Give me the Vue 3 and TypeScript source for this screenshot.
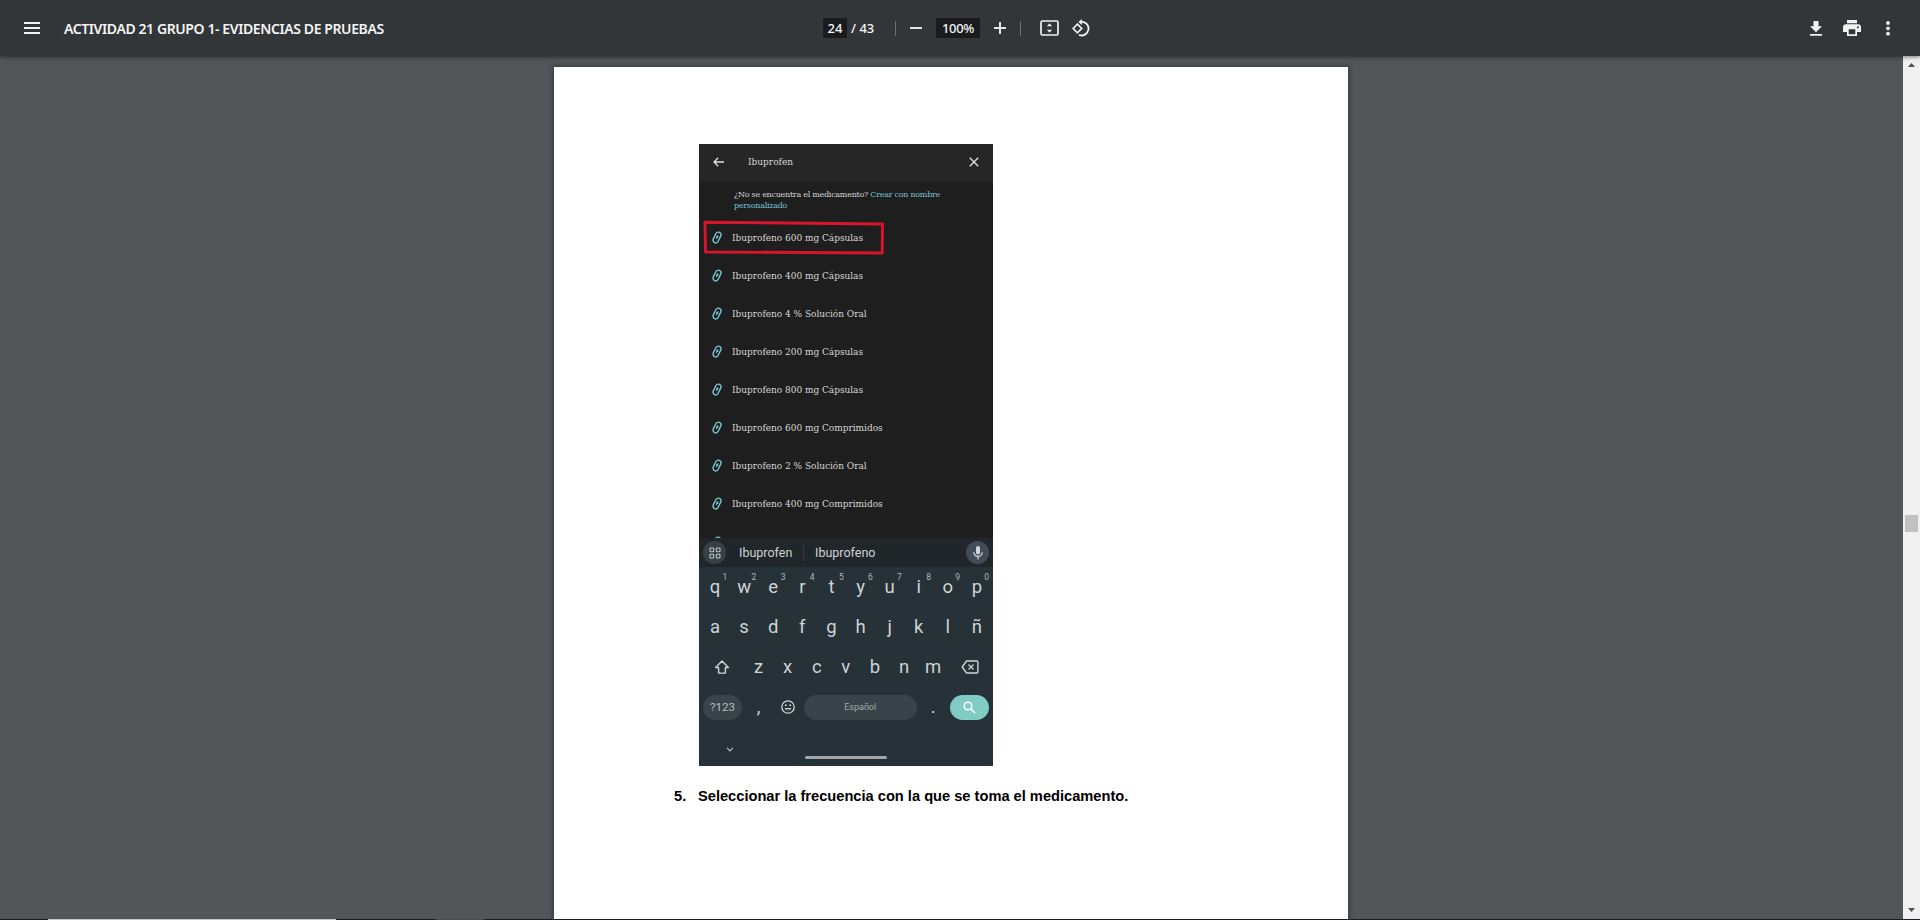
<script setup lang="ts">
interface Key {
  label: string
  hint?: string
}

const medicines: string[] = [
  'Ibuprofeno 600 mg Cápsulas',
  'Ibuprofeno 400 mg Cápsulas',
  'Ibuprofeno 4 % Solución Oral',
  'Ibuprofeno 200 mg Cápsulas',
  'Ibuprofeno 800 mg Cápsulas',
  'Ibuprofeno 600 mg Comprimidos',
  'Ibuprofeno 2 % Solución Oral',
  'Ibuprofeno 400 mg Comprimidos',
]

const topRow: Key[] = [...'qwertyuiop'].map((label, i) => ({ label, hint: String((i + 1) % 10) }))
const homeRow: Key[] = [...'asdfghjklñ'].map((label) => ({ label }))
const bottomRow: string[] = [...'zxcvbnm']
</script>

<template>
  <div class="viewer">
    <header class="toolbar">
      <div class="side left">
        <svg class="menu" width="16" height="12" viewBox="0 0 16 12"><path d="M0 0h16v2H0zM0 5h16v2H0zM0 10h16v2H0z" fill="#f1f1f1" /></svg>
        <span class="title">ACTIVIDAD 21 GRUPO 1- EVIDENCIAS DE PRUEBAS</span>
      </div>
      <div class="center">
        <span class="field page-no">24</span>
        <span class="total">/ 43</span>
        <i class="divider first"></i>
        <svg class="minus" width="12" height="12" viewBox="0 0 12 12"><path d="M0 5h12v2H0z" fill="#e4e4e4" /></svg>
        <span class="field zoom">100%</span>
        <svg class="plus" width="12" height="12" viewBox="0 0 12 12"><path d="M5 0h2v5h5v2H7v5H5V7H0V5h5z" fill="#e4e4e4" /></svg>
        <i class="divider second"></i>
        <svg class="fit" width="19" height="16" viewBox="0 0 19 16">
          <rect x="1" y="1" width="17" height="14" rx="1.4" fill="none" stroke="#f1f1f1" stroke-width="1.7" />
          <path d="M9.5 3.2l2.6 3H6.9zM9.5 12.8l2.6-3H6.9z" fill="#f1f1f1" />
        </svg>
        <svg class="rotate" width="18" height="18" viewBox="0 0 18 18">
          <path d="M5.4 5.2l4.3 4.3-4.3 4.3-4.3-4.3z" fill="none" stroke="#f1f1f1" stroke-width="1.7" />
          <path d="M9 2.9a6.8 6.8 0 1 1-2 13" fill="none" stroke="#f1f1f1" stroke-width="1.8" />
          <path d="M9.9 0v6L6.4 2.9z" fill="#f1f1f1" />
        </svg>
      </div>
      <div class="side right">
        <svg width="12" height="15" viewBox="0 0 12 15"><path d="M3.5 0h5v5.3H12l-6 6-6-6h3.5zM0 13h12v1.8H0z" fill="#f1f1f1" /></svg>
        <svg class="print" width="18" height="16" viewBox="0 0 18 16">
          <path fill-rule="evenodd" d="M4 0h10v3.3H4zM3 4.3h12a3 3 0 0 1 3 3v4.6h-4V16H4v-4.1H0V7.300a3 3 0 0 1 3-3zM5.700 9.300v4.900h6.600V9.300zM14.900 6.200a1 1 0 1 0 .01 0z" fill="#f1f1f1" />
        </svg>
        <svg width="4" height="15" viewBox="0 0 4 15"><g fill="#f1f1f1"><circle cx="2" cy="2" r="1.9" /><circle cx="2" cy="7.300" r="1.9" /><circle cx="2" cy="12.700" r="1.9" /></g></svg>
      </div>
    </header>

    <div class="body">
      <main class="canvas">
        <article class="sheet">
          <section class="phone">
            <div class="search">
              <svg width="11" height="10" viewBox="0 0 11 10"><path d="M11 5H1M5.200.700L1 5l4.200 4.300" fill="none" stroke="#e4e4e4" stroke-width="1.300" /></svg>
              <span class="query">Ibuprofen</span>
              <svg width="10" height="10" viewBox="0 0 10 10"><path d="M.8.8l8.400 8.400M9.200.8L.8 9.200" stroke="#e4e4e4" stroke-width="1.300" /></svg>
            </div>
            <p class="missing">¿No se encuentra el medicamento? <span class="link">Crear con nombre<br />personalizado</span></p>
            <ul class="list">
              <li v-for="(name, i) in medicines" :key="name" class="item">
                <svg class="pill" width="10" height="13" viewBox="0 0 10 13">
                  <g transform="rotate(26 5 6.500)" fill="none" stroke="#78c6d4" stroke-width="1.400">
                    <rect x="2.300" y=".9" width="5.400" height="11.200" rx="2.700" />
                    <path d="M5 4v4.200M3.900 6.400l1.100-1.300 1.100 1.300" stroke-width="1" />
                  </g>
                </svg>
                <span class="name">{{ name }}</span>
                <svg v-if="i === 0" class="mark" width="182" height="36" viewBox="0 0 182 36">
                  <path d="M2 2.200L179.500 4l-.3 29L2.500 32z" fill="none" stroke="#d9152c" stroke-width="2.900" stroke-linejoin="round" />
                </svg>
              </li>
              <li class="item last">
                <svg class="pill" width="10" height="2" viewBox="0 0 10 2"><path d="M3.500 2Q6 0 8.500 2" fill="none" stroke="#78c6d4" stroke-width="1.200" /></svg>
              </li>
            </ul>

            <div class="suggestions">
              <span class="round apps">
                <svg width="12" height="12" viewBox="0 0 12 12"><g fill="none" stroke="#bcc3c5" stroke-width="1.100"><rect x="1" y="1" width="3.700" height="3.700" rx=".8" /><rect x="7.300" y="1" width="3.700" height="3.700" rx=".8" /><rect x="1" y="7.300" width="3.700" height="3.700" rx=".8" /><rect x="7.300" y="7.300" width="3.700" height="3.700" rx=".8" /></g></svg>
              </span>
              <span class="word one">Ibuprofen</span>
              <i class="bar"></i>
              <span class="word two">Ibuprofeno</span>
              <span class="round mic">
                <svg width="10" height="14" viewBox="0 0 10 14"><rect x="3" y="0" width="4" height="8.500" rx="2" fill="#d3d6d8" /><path d="M.8 6.200a4.200 4.200 0 0 0 8.400 0M5 10.400V13.500" fill="none" stroke="#d3d6d8" stroke-width="1.300" /></svg>
              </span>
            </div>

            <div class="keyboard">
              <div class="row letters">
                <span v-for="key in topRow" :key="key.label" class="key">{{ key.label }}<sup class="hint">{{ key.hint }}</sup></span>
              </div>
              <div class="row letters">
                <span v-for="key in homeRow" :key="key.label" class="key">{{ key.label }}</span>
              </div>
              <div class="row third">
                <span class="wide">
                  <svg width="16" height="14" viewBox="0 0 16 14"><path d="M8 1l6.400 6.500h-3v5.600H4.600V7.500h-3z" fill="none" stroke="#ced3d5" stroke-width="1.400" stroke-linejoin="round" /></svg>
                </span>
                <span v-for="letter in bottomRow" :key="letter" class="key">{{ letter }}</span>
                <span class="wide">
                  <svg width="18" height="14" viewBox="0 0 18 14"><path d="M5.500 1H16q.9 0 .9.900v10.200q0 .9-.9.900H5.500L1.200 7z" fill="none" stroke="#ced3d5" stroke-width="1.400" stroke-linejoin="round" /><path d="M7.500 4.500l5 5M12.500 4.500l-5 5" stroke="#ced3d5" stroke-width="1.300" /></svg>
                </span>
              </div>
              <div class="row fourth">
                <span class="symbols">?123</span>
                <span class="key">,</span>
                <span class="key">
                  <svg width="14" height="14" viewBox="0 0 14 14"><circle cx="7" cy="7" r="6.200" fill="none" stroke="#ced3d5" stroke-width="1.300" /><circle cx="4.800" cy="5.300" r="1" fill="#ced3d5" /><circle cx="9.200" cy="5.300" r="1" fill="#ced3d5" /><path d="M3.500 8h7a3.600 3.200 0 0 1-7 0z" fill="#ced3d5" /><path d="M5 9h4q-2 2-4 0z" fill="#263138" /></svg>
                </span>
                <span class="space">Español</span>
                <span class="key dot">.</span>
                <span class="go">
                  <svg width="13" height="13" viewBox="0 0 13 13"><circle cx="5" cy="5" r="3.800" fill="none" stroke="#fff" stroke-width="1.500" /><path d="M7.800 7.800l4.200 4.200" stroke="#fff" stroke-width="1.700" /></svg>
                </span>
              </div>
              <div class="nav">
                <svg class="chevron" width="8" height="5" viewBox="0 0 8 5"><path d="M1 .8L4 3.900 7 .8" fill="none" stroke="#b4babd" stroke-width="1.200" /></svg>
                <i class="handle"></i>
              </div>
            </div>
          </section>
          <p class="step"><span class="number">5.</span><span class="sentence">Seleccionar la frecuencia con la que se toma el medicamento.</span></p>
        </article>
      </main>
      <aside class="scroll">
        <svg width="7" height="4" viewBox="0 0 7 4"><path d="M0 4L3.500 0 7 4z" fill="#505050" /></svg>
        <i class="thumb"></i>
        <svg width="7" height="4" viewBox="0 0 7 4"><path d="M0 0L3.500 4 7 0z" fill="#505050" /></svg>
      </aside>
    </div>
    <footer class="taskline"><i class="active"></i><i class="idle"></i></footer>
  </div>
</template>

<style>
body {
  margin: 0;
  overflow: hidden;
}
</style>

<style scoped>
.viewer {
  width: 1920px;
  height: 920px;
  display: flex;
  flex-direction: column;
  background: #525659;
  overflow: hidden;
}
svg {
  display: block;
  flex: none;
}
.toolbar {
  position: relative;
  z-index: 1;
  height: 56px;
  flex: none;
  display: flex;
  align-items: center;
  background: #323639;
  box-shadow: 0 1px 4px rgba(0, 0, 0, 0.5);
  color: #f5f5f5;
  font-family: "Noto Sans", "Open Sans", sans-serif;
}
.side {
  display: flex;
  align-items: center;
}
.left {
  width: 823px;
  padding-left: 24px;
  box-sizing: border-box;
}
.title {
  margin: 1px 0 0 24px;
  font-size: 14px;
  font-weight: 600;
  letter-spacing: -0.4px;
  white-space: nowrap;
}
.center {
  width: 280px;
  display: flex;
  align-items: center;
  font-size: 13px;
  font-weight: 500;
}
.field {
  height: 20px;
  background: #191b1c;
  line-height: 20px;
  text-align: center;
}
.page-no {
  width: 24px;
}
.total {
  width: 24px;
  margin-left: 4px;
  white-space: nowrap;
}
.divider {
  width: 1px;
  height: 15px;
  background: #6e7173;
}
.first {
  margin: 0 14px 0 20px;
}
.zoom {
  width: 44px;
  margin: 0 14px;
  letter-spacing: -0.3px;
}
.second {
  margin: 0 19px 0 14px;
}
.rotate {
  margin-left: 13px;
}
.right {
  margin-left: auto;
  padding-right: 30px;
}
.print {
  margin: 0 25px 0 21px;
}
.body {
  flex: 1;
  min-height: 0;
  display: flex;
}
.canvas {
  flex: 1;
  padding: 11px 0 0 554px;
  display: flex;
}
.sheet {
  width: 794px;
  padding: 77px 0 0 145px;
  box-sizing: border-box;
  background: #fff;
  box-shadow: 0 0 5px 1px #33383d;
}
.phone {
  width: 294px;
  height: 622px;
  display: flex;
  flex-direction: column;
  background: #1e1e1e;
  color: #d6d6d6;
  font-family: "Roboto Slab", "DejaVu Serif", serif;
}
.search {
  height: 37px;
  flex: none;
  padding: 0 14px 1px;
  box-sizing: border-box;
  display: flex;
  align-items: center;
  background: #262626;
}
.query {
  flex: 1;
  margin-left: 24px;
  font-size: 9px;
}
.missing {
  height: 38px;
  margin: 0;
  padding: 8px 0 0 35px;
  box-sizing: border-box;
  font-size: 8px;
  line-height: 11px;
  letter-spacing: -0.27px;
  white-space: nowrap;
}
.link {
  color: #76c5d2;
}
.list {
  flex: none;
  height: 319px;
  margin: 0;
  padding: 0;
  list-style: none;
  overflow: hidden;
}
.item {
  position: relative;
  height: 38px;
  padding-left: 13px;
  display: flex;
  align-items: center;
}
.pill {
  margin-top: -1px;
}
.name {
  margin-left: 10px;
  font-size: 9px;
  letter-spacing: -0.03px;
  white-space: nowrap;
}
.mark {
  position: absolute;
  left: 4px;
  top: 1px;
}
.last {
  height: 15px;
  align-items: flex-end;
}
.suggestions {
  height: 30px;
  flex: none;
  padding: 0 4px 1px;
  box-sizing: border-box;
  display: flex;
  align-items: center;
  background: #21262a;
  color: #ced2d4;
  font-family: Roboto, sans-serif;
  font-size: 12.5px;
}
.round {
  width: 23px;
  height: 23px;
  display: flex;
  align-items: center;
  justify-content: center;
  border-radius: 50%;
}
.apps {
  background: #374145;
}
.mic {
  margin-left: auto;
  background: #434b56;
}
.word.one {
  width: 64px;
  margin-left: 13px;
}
.bar {
  width: 1px;
  height: 16px;
  margin-right: 11px;
  background: #353b3f;
}
.keyboard {
  flex: 1;
  display: flex;
  flex-direction: column;
  margin-top: -1px;
  background: #263138;
  color: #ced3d5;
  font-family: Roboto, sans-serif;
  font-size: 18.5px;
}
.row {
  height: 40px;
  display: flex;
  align-items: center;
}
.letters {
  padding-left: 1.5px;
}
.key {
  position: relative;
  width: 29.1px;
  flex: none;
  display: flex;
  justify-content: center;
}
.hint {
  position: absolute;
  left: 22px;
  top: -3px;
  color: #b0b7ba;
  font-size: 8.5px;
  line-height: 9px;
}
.wide {
  width: 45px;
  display: flex;
  justify-content: center;
}
.fourth {
  padding-left: 4px;
}
.symbols,
.space,
.go {
  height: 25px;
  display: flex;
  align-items: center;
  justify-content: center;
  border-radius: 13px;
  background: #39444a;
}
.symbols {
  width: 39px;
  margin-right: 2px;
  color: #b5bbbe;
  font-size: 11.5px;
}
.space {
  width: 113px;
  margin-left: 1.5px;
  color: #a0a8ab;
  font-size: 9px;
}
.dot {
  margin: 0 2px;
}
.go {
  width: 39px;
  background: #80cbc4;
}
.nav {
  flex: 1;
  padding: 12px 0 0 27px;
  display: flex;
  align-items: flex-start;
}
.chevron {
  margin-top: 8px;
}
.handle {
  width: 82px;
  height: 3px;
  margin: 17px 0 0 71px;
  border-radius: 2px;
  background: #a1a6a8;
}
.step {
  margin: 21px 0 0 -25px;
  display: flex;
  color: #000;
  font: bold 14.667px/18px "Liberation Sans", Arial, sans-serif;
  letter-spacing: -0.01px;
  white-space: nowrap;
}
.number {
  width: 24px;
}
.scroll {
  width: 17px;
  padding: 7px 0 7px;
  box-sizing: border-box;
  display: flex;
  flex-direction: column;
  align-items: center;
  background: #f0f0f0;
}
.thumb {
  width: 13px;
  height: 17px;
  margin: 448px 0 auto;
  background: #c1c1c1;
}
.taskline {
  height: 1px;
  flex: none;
  display: flex;
  background: #1f1c21;
}
.active {
  width: 288px;
  margin-left: 48px;
  background: #c9c6c9;
}
.idle {
  width: 48px;
  margin-left: 100px;
  background: #4c494c;
}
</style>
